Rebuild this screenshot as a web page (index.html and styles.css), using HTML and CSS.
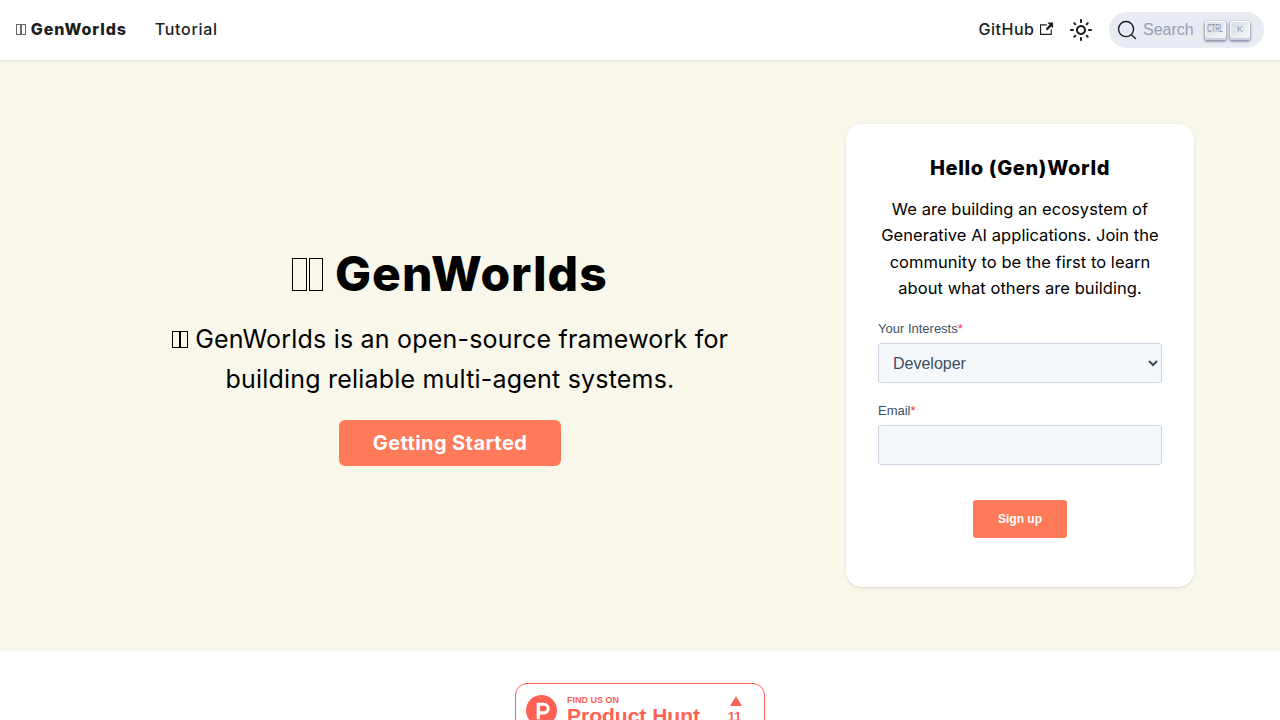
FILE: index.html
```html
<!DOCTYPE html>
<html lang="en">
<head>
  <meta charset="UTF-8" />
  <title>GenWorlds</title>
  <link rel="stylesheet" href="styles.css">
</head>
<body>

  <nav class="navbar">
    <div class="nav-left">
      <a class="brand" href="#"><span class="tofu"><i></i><i></i></span> GenWorlds</a>
      <a class="nav-link" href="#">Tutorial</a>
    </div>
    <div class="nav-right">
      <a class="nav-link github" href="#">GitHub
        <svg class="ext-icon" width="13.5" height="13.5" viewBox="0 0 24 24"><path fill="currentColor" d="M21 13v10h-21v-19h12v2h-10v15h17v-8h2zm3-12h-10.988l4.035 4-6.977 7.07 2.828 2.828 6.977-7.07 4.125 4.172v-11z"/></svg>
      </a>
      <button class="theme-btn" type="button" aria-label="Theme">
        <svg width="24" height="24" viewBox="0 0 24 24"><path fill="currentColor" d="M12,9c1.65,0,3,1.35,3,3s-1.35,3-3,3s-3-1.35-3-3S10.35,9,12,9 M12,7c-2.76,0-5,2.24-5,5s2.24,5,5,5s5-2.24,5-5 S14.76,7,12,7L12,7z M2,13l2,0c0.55,0,1-0.45,1-1s-0.45-1-1-1l-2,0c-0.55,0-1,0.45-1,1S1.45,13,2,13z M20,13l2,0c0.55,0,1-0.45,1-1 s-0.45-1-1-1l-2,0c-0.55,0-1,0.45-1,1S19.45,13,20,13z M11,2v2c0,0.55,0.45,1,1,1s1-0.45,1-1V2c0-0.55-0.45-1-1-1S11,1.45,11,2z M11,20v2c0,0.55,0.45,1,1,1s1-0.45,1-1v-2c0-0.55-0.45-1-1-1C11.45,19,11,19.45,11,20z M5.99,4.58c-0.39-0.39-1.03-0.39-1.41,0 c-0.39,0.39-0.39,1.03,0,1.41l1.06,1.06c0.39,0.39,1.03,0.39,1.41,0s0.39-1.03,0-1.41L5.99,4.58z M18.36,16.95 c-0.39-0.39-1.03-0.39-1.41,0c-0.39,0.39-0.39,1.03,0,1.41l1.06,1.06c0.39,0.39,1.03,0.39,1.41,0c0.39-0.39,0.39-1.03,0-1.41 L18.36,16.95z M19.42,5.99c0.39-0.39,0.39-1.03,0-1.41c-0.39-0.39-1.03-0.39-1.41,0l-1.06,1.06c-0.39,0.39-0.39,1.03,0,1.41 s1.03,0.39,1.41,0L19.42,5.99z M7.05,18.36c0.39-0.39,0.39-1.03,0-1.41c-0.39-0.39-1.03-0.39-1.41,0l-1.06,1.06 c-0.39,0.39-0.39,1.03,0,1.41s1.03,0.39,1.41,0L7.05,18.36z"/></svg>
      </button>
      <button class="search-btn" type="button">
        <svg width="20" height="20" viewBox="0 0 20 20"><path d="M14.386 14.386l4.0877 4.0877-4.0877-4.0877c-2.9418 2.9419-7.7115 2.9419-10.6533 0-2.9419-2.9418-2.9419-7.7115 0-10.6533 2.9418-2.9419 7.7115-2.9419 10.6533 0 2.9419 2.9418 2.9419 7.7115 0 10.6533z" stroke="#1c1e21" fill="none" fill-rule="evenodd" stroke-linecap="round" stroke-linejoin="round" stroke-width="1.4"/></svg>
        <span class="search-text">Search</span>
        <span class="keys">
          <kbd class="key key-ctrl"><span>CTRL</span></kbd>
          <kbd class="key">K</kbd>
        </span>
      </button>
    </div>
  </nav>

  <header class="hero">
    <div class="hero-inner">
      <div class="hero-text">
        <h1><span class="tofu"><i></i><i></i></span> GenWorlds</h1>
        <p class="tagline"><span class="tofu"><i></i><i></i></span> GenWorlds is an open-source framework for building reliable multi-agent systems.</p>
        <a class="cta" href="#">Getting Started</a>
      </div>
      <div class="signup-card">
        <h3>Hello (Gen)World</h3>
        <p class="card-text">We are building an ecosystem of Generative AI applications. Join the community to be the first to learn about what others are building.</p>
        <form class="signup-form">
          <div class="field">
            <label for="interests">Your Interests<span class="req">*</span></label>
            <select id="interests">
              <option>Developer</option>
            </select>
          </div>
          <div class="field">
            <label for="email">Email<span class="req">*</span></label>
            <input id="email" type="email">
          </div>
          <button class="signup-btn" type="button">Sign up</button>
        </form>
      </div>
    </div>
  </header>

  <section class="badges">
    <a class="ph-badge" href="#">
      <svg class="ph-logo" width="31" height="31" viewBox="0 0 32 32">
        <circle cx="16" cy="16" r="16" fill="#ff6154"/>
        <path fill="#fff" d="M11 8h7.500a6 6 0 0 1 0 12H14.300v5H11zM14.300 11.200v5.600h4.200a2.800 2.800 0 0 0 0-5.600z"/>
      </svg>
      <span class="ph-text">
        <span class="ph-small">FIND US ON</span>
        <span class="ph-name">Product Hunt</span>
      </span>
      <span class="ph-votes">
        <span class="ph-arrow"></span>
        <span class="ph-count">11</span>
      </span>
    </a>
  </section>

</body>
</html>
```

FILE: styles.css
```css
* {
  box-sizing: border-box;
}

body {
  margin: 0;
  font-family: "Inter", sans-serif;
  color: #1c1e21;
  background: #fff;
}

a {
  color: inherit;
  text-decoration: none;
}

/* the two missing-glyph boxes in front of the product name */
.tofu {
  display: inline-flex;
  gap: 0.03em;
}

.tofu i {
  width: 0.31em;
  height: 0.67em;
  border: max(0.7px, 0.035em) solid currentColor;
}

.navbar {
  height: 60px;
  padding: 0 16px;
  display: flex;
  align-items: center;
  justify-content: space-between;
  background: #fff;
  box-shadow: 0 1px 2px rgba(0, 0, 0, 0.1);
  position: relative;
}

.nav-left,
.nav-right {
  display: flex;
  align-items: center;
}

.brand {
  padding-bottom: 2px;
  font-size: 16px;
  font-weight: 800;
  letter-spacing: 0.9px;
  margin-right: 28px;
}

.brand .tofu {
  color: #666;
}

.nav-link {
  padding-bottom: 2px;
  font-size: 16px;
  font-weight: 500;
  letter-spacing: 0.7px;
}

.github {
  display: flex;
  align-items: center;
  gap: 5px;
  letter-spacing: 0.5px;
}

.ext-icon {
  margin-top: -1px;
}

.theme-btn {
  width: 32px;
  height: 32px;
  margin: 0 12px 0 12px;
  padding: 0;
  display: flex;
  align-items: center;
  justify-content: center;
  border: 0;
  background: none;
  color: #1c1e21;
}

.search-btn {
  width: 155px;
  height: 36px;
  padding: 0 14px 0 8px;
  display: flex;
  align-items: center;
  border: 0;
  border-radius: 40px;
  background: #e9ebf2;
  font-family: "Liberation Sans", sans-serif;
}

.search-text {
  margin-left: 6px;
  font-size: 16px;
  color: #969faf;
}

.keys {
  margin-left: auto;
  display: flex;
  gap: 4px;
}

.key {
  width: 20px;
  height: 19px;
  display: flex;
  align-items: center;
  justify-content: center;
  border-radius: 3px;
  background: linear-gradient(-225deg, #d5dbe4, #f8f8f8);
  box-shadow: inset 0 -2px 0 0 #cdcde6, inset 0 0 1px 1px #fff, 0 1px 2px 1px rgba(30, 35, 90, 0.4);
  font-family: "Liberation Sans", sans-serif;
  font-size: 9px;
  color: #969faf;
  padding-bottom: 3px;
}

.key-ctrl {
  width: 21px;
  font-size: 10px;
}

.key-ctrl span {
  display: inline-block;
  transform: scaleX(0.6);
  color: #7f8899;
}

.hero {
  background: #f9f7ea;
  padding: 64px 0;
}

.hero-inner {
  width: 1108px;
  margin: 0 auto;
  display: grid;
  grid-template-columns: 728px 348px;
  gap: 32px;
  align-items: center;
}

.hero-text {
  padding-bottom: 2px;
  text-align: center;
  color: #000;
}

.hero-text h1 {
  margin: 0 0 15px;
  font-size: 48px;
  line-height: 60px;
  font-weight: 800;
  letter-spacing: 1px;
}

.tagline {
  width: 600px;
  margin: 0 auto 21px;
  font-size: 25px;
  line-height: 40px;
  letter-spacing: 0.2px;
}

.cta {
  display: inline-block;
  padding: 0 34px;
  height: 46px;
  line-height: 46px;
  border-radius: 6px;
  background: #ff7a59;
  color: #fff;
  font-size: 20px;
  font-weight: 700;
  letter-spacing: 0.4px;
}

.signup-card {
  height: 463px;
  padding: 31px 32px 32px;
  background: #fff;
  border-radius: 16px;
  box-shadow: 0 1px 3px rgba(0, 0, 0, 0.12);
  color: #000;
}

.signup-card h3 {
  margin: 0 0 15px;
  font-size: 20px;
  line-height: 26px;
  font-weight: 800;
  letter-spacing: 0.65px;
  text-align: center;
}

.card-text {
  margin: 0 0 19px;
  font-size: 16.5px;
  line-height: 26.4px;
  letter-spacing: 0.05px;
  text-align: center;
}

.signup-form {
  font-family: "Liberation Sans", sans-serif;
}

.field {
  margin-bottom: 20px;
}

.field label {
  display: block;
  margin-bottom: 6px;
  font-size: 13px;
  line-height: 16px;
  color: #3d4f63;
}

.req {
  color: #f2323f;
}

.field select,
.field input {
  display: block;
  width: 100%;
  height: 40px;
  padding: 0 10px;
  border: 1px solid #cbd6e2;
  border-radius: 3px;
  background: #f5f8fa;
  font-family: "Liberation Sans", sans-serif;
  font-size: 16px;
  color: #3d4f63;
}

.field select {
  padding-top: 2px;
}

.signup-btn {
  display: block;
  width: 94px;
  height: 38px;
  margin: 35px auto 0;
  border: 0;
  border-radius: 3px;
  background: #ff7a59;
  color: #fff;
  font-family: "Liberation Sans", sans-serif;
  font-size: 12px;
  font-weight: 700;
}

.badges {
  padding: 32px 0;
  display: flex;
  justify-content: center;
}

.ph-badge {
  width: 250px;
  height: 54px;
  padding: 0 10px;
  display: flex;
  align-items: center;
  border: 1px solid #ff6154;
  border-radius: 12px;
  background: #fff;
  color: #ff6154;
  font-family: "Liberation Sans", sans-serif;
}

.ph-text {
  align-self: flex-start;
  margin-left: 10px;
  padding-top: 11px;
  display: flex;
  flex-direction: column;
}

.ph-small {
  font-size: 9px;
  line-height: 10px;
  font-weight: 700;
}

.ph-name {
  margin-top: -1px;
  font-size: 21px;
  line-height: 24px;
  font-weight: 700;
}

.ph-votes {
  margin-left: auto;
  margin-right: 12px;
  display: flex;
  flex-direction: column;
  align-items: center;
  gap: 4px;
}

.ph-arrow {
  margin-left: 3px;
  width: 0;
  height: 0;
  border-left: 6px solid transparent;
  border-right: 6px solid transparent;
  border-bottom: 10px solid #ff6154;
}

.ph-count {
  font-size: 13px;
  line-height: 14px;
  font-weight: 700;
}
```
